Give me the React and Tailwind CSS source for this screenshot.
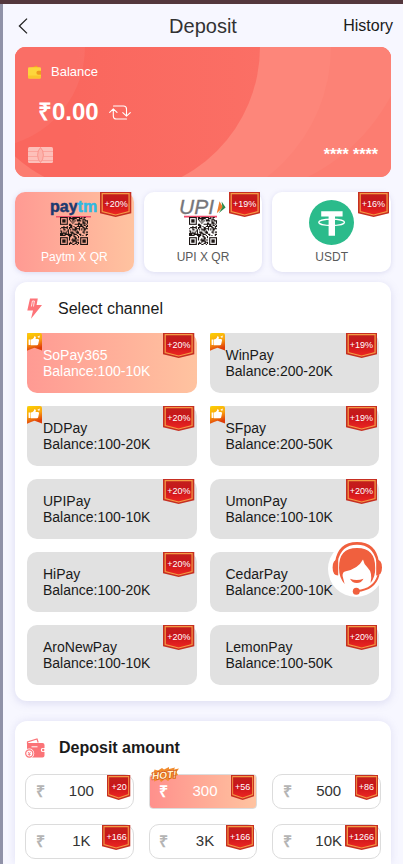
import { useState } from 'react';
import clsx from 'clsx';

const methods = [
  { id: 'paytm', label: 'Paytm X QR', bonus: '+20%' },
  { id: 'upi', label: 'UPI X QR', bonus: '+19%' },
  { id: 'usdt', label: 'USDT', bonus: '+16%' },
];

const channels = [
  { name: 'SoPay365', range: '100-10K', bonus: '+20%', liked: true },
  { name: 'WinPay', range: '200-20K', bonus: '+19%', liked: true },
  { name: 'DDPay', range: '100-20K', bonus: '+20%', liked: true },
  { name: 'SFpay', range: '200-50K', bonus: '+19%', liked: true },
  { name: 'UPIPay', range: '100-10K', bonus: '+20%' },
  { name: 'UmonPay', range: '100-10K', bonus: '+20%' },
  { name: 'HiPay', range: '100-20K', bonus: '+20%' },
  { name: 'CedarPay', range: '200-10K' },
  { name: 'AroNewPay', range: '100-10K', bonus: '+20%' },
  { name: 'LemonPay', range: '100-50K', bonus: '+20%' },
];

const amounts = [
  { value: '100', bonus: '+20' },
  { value: '300', bonus: '+56', hot: true },
  { value: '500', bonus: '+86' },
  { value: '1K', bonus: '+166' },
  { value: '3K', bonus: '+166' },
  { value: '10K', bonus: '+1266' },
];

function BonusBadge({ children }) {
  return (
    <span className="absolute top-0 right-[2px] flex h-[25px] items-center px-1 text-[9px] leading-none text-white">
      <svg className="absolute inset-0 h-full w-full" viewBox="0 0 31 25" preserveAspectRatio="none" aria-hidden="true">
        <defs>
          <linearGradient id="badge" x1="0" y1="0" x2="0" y2="1">
            <stop offset="0" stopColor="#c2201c" />
            <stop offset="0.45" stopColor="#c9141a" />
            <stop offset="1" stopColor="#ee2622" />
          </linearGradient>
        </defs>
        <path d="M0 0H31V21.2L15.5 25 0 21.2Z" fill="#c62f22" />
        <path d="M2.2 1.6H28.8V19.6L15.5 23 2.2 19.6Z" fill="url(#badge)" stroke="#f59a45" strokeWidth="1.2" />
      </svg>
      <span className="relative">{children}</span>
    </span>
  );
}

function LikeRibbon() {
  return (
    <svg className="absolute top-0 left-0 h-[18px] w-[15px]" viewBox="0 0 15 18" aria-hidden="true">
      <defs>
        <linearGradient id="ribbon" x1="0" y1="0" x2="0.3" y2="1">
          <stop offset="0" stopColor="#fcd400" />
          <stop offset="0.55" stopColor="#f9a313" />
          <stop offset="1" stopColor="#e03c08" />
        </linearGradient>
      </defs>
      <path d="M2 0H13Q15 0 15 2V17.6L11 16 7.5 14.8 4 16 0 17.8V2Q0 0 2 0Z" fill="url(#ribbon)" />
      <path d="M1.6 6.6H3.4V12H1.6ZM3.9 6.6 5.6 6.1Q7 5.2 7.3 3.3 9 3 8.9 4.8L8.5 6.1H11Q12.3 6.3 12 7.6L11.2 11.2Q10.9 12.2 10 12.2H3.9Z" fill="#fff" />
      <path d="M10.3 3.8 13 2.4 12.2 5Z" fill="#fff" />
    </svg>
  );
}

const QR_SIZE = 25;
const FINDERS = [[0, 0], [QR_SIZE - 7, QR_SIZE - 7], [0, QR_SIZE - 7]];

function qrPath() {
  let d = '';
  let seed = 91;
  for (let y = 0; y < QR_SIZE; y++) {
    for (let x = 0; x < QR_SIZE; x++) {
      seed = (seed * 48271) % 2147483647;
      const reserved = FINDERS.some(([fx, fy]) => x >= fx - 1 && x <= fx + 7 && y >= fy - 1 && y <= fy + 7);
      if (!reserved && seed / 2147483647 > 0.52) d += `M${x} ${y}h1v1h-1z`;
    }
  }
  return d;
}

const QR_PATH = qrPath();

function QrCode() {
  return (
    <svg className="h-[28px] w-[28px]" viewBox="0 0 25 25" aria-hidden="true">
      <path d={QR_PATH} fill="#1c1513" />
      {FINDERS.map(([x, y]) => (
        <g key={`${x}-${y}`} fill="#1c1513">
          <rect x={x + 0.5} y={y + 0.5} width="6" height="6" fill="none" stroke="#1c1513" />
          <rect x={x + 2} y={y + 2} width="3" height="3" />
        </g>
      ))}
    </svg>
  );
}

function PaytmQr() {
  return (
    <span className="flex h-[45px] flex-col items-center">
      <svg className="h-[17px] w-[48px] overflow-visible" viewBox="0 0 48 17" aria-label="Paytm" role="img">
        <text x="0" y="12" fontFamily="'Liberation Sans', Arial, sans-serif" fontWeight="700" fontSize="16" strokeWidth="0.5">
          <tspan fill="#1d3a70" stroke="#1d3a70">pay</tspan>
          <tspan fill="#2fb9e2" stroke="#2fb9e2">tm</tspan>
        </text>
        <path d="M6 16.8H41" stroke="#f0506a" strokeWidth="1.6" />
      </svg>
      <QrCode />
    </span>
  );
}

function UpiQr() {
  return (
    <span className="flex h-[45px] flex-col items-center">
      <svg className="h-[17px] w-[46px] overflow-visible" viewBox="0 0 46 17" aria-label="UPI" role="img">
        <text x="-1" y="14" fontFamily="'Liberation Sans', Arial, sans-serif" fontStyle="italic" fontSize="21" fill="#77767a" stroke="#77767a" strokeWidth="0.3">
          UPI
        </text>
        <path d="M39.5 1.2 43 7.2 36.8 13.2Z" fill="#ec7c2c" />
        <path d="M41.6 1.5 45.6 7.4 38.6 13.2 42.4 7.2Z" fill="#2c8a4b" />
        <path d="M4 16.6H37" stroke="#ee4a6a" strokeWidth="1.6" />
      </svg>
      <QrCode />
    </span>
  );
}

function UsdtIcon() {
  return (
    <svg className="h-[45px] w-[45px]" viewBox="0 0 45 45" aria-hidden="true">
      <circle cx="22.5" cy="22.5" r="22.5" fill="#2bbb8b" />
      <path d="M12.2 11.2H33.6V16.4H26V35.8H19.6V16.4H12.2Z" fill="#fff" />
      <ellipse cx="22.6" cy="22.3" rx="12.9" ry="3.2" fill="none" stroke="#fff" strokeWidth="1.3" />
    </svg>
  );
}

const methodIcons = { paytm: PaytmQr, upi: UpiQr, usdt: UsdtIcon };

function BalanceCard() {
  return (
    <section className="relative overflow-hidden rounded-[11px] bg-[#fb766b] px-[13px] pt-[15px] pb-[14px] text-white">
      <svg className="absolute inset-0 h-full w-full" viewBox="0 0 376 130" preserveAspectRatio="none" aria-hidden="true">
        <defs>
          <linearGradient id="cardDark" gradientUnits="userSpaceOnUse" x1="60" y1="0" x2="245" y2="0">
            <stop offset="0" stopColor="#fa675e" />
            <stop offset="1" stopColor="#fb6f65" />
          </linearGradient>
        </defs>
        <rect width="376" height="130" fill="#fc7d71" />
        <circle cx="208" cy="-40" r="190" fill="#fc8276" />
        <circle cx="152" cy="0" r="164" fill="#fd867a" />
        <circle cx="98" cy="0" r="147" fill="url(#cardDark)" />
        <circle cx="-31" cy="0" r="101" fill="#fff" fillOpacity="0.05" />
      </svg>
      <div className="relative flex h-5 items-center gap-[10px] text-[13px]">
        <svg className="h-[14px] w-[13px]" viewBox="0 0 13 14" aria-hidden="true">
          <path d="M3 3 8.5 0.5 10.5 3Z" fill="#f3a61d" />
          <rect y="2.2" width="13" height="11.3" rx="1.2" fill="#fdd63c" />
          <path d="M0 10.5H13V12.3Q13 13.5 11.8 13.5H1.2Q0 13.5 0 12.3Z" fill="#fbc52c" />
          <path d="M13 5.8H10.2Q8.4 6 8.4 7.8T10.2 9.8H13Z" fill="#ee9a1f" />
        </svg>
        <span>Balance</span>
      </div>
      <div className="relative mt-[14px] flex h-8 items-center gap-[10px] pl-[10px]">
        <span className="text-2xl font-bold">₹0.00</span>
        <button type="button" aria-label="Refresh balance">
          <svg className="h-[15px] w-[22px]" viewBox="0 0 22 15" fill="none" stroke="#fff" strokeWidth="1.1" strokeLinecap="round" strokeLinejoin="round">
            <path d="M4.5 1H14.5Q17.5 1 17.5 4V11M13.8 7.6 17.5 11.2 21.3 7.6" />
            <path d="M17.5 14H7.5Q4.3 14 4.3 11V3.8M0.7 7.4 4.3 3.8 8 7.4" />
          </svg>
        </button>
      </div>
      <div className="relative mt-[19px] flex h-4 items-center justify-between">
        <svg className="h-4 w-[25px]" viewBox="0 0 25 16" aria-hidden="true">
          <rect width="25" height="16" rx="1.5" fill="#fdc0ba" />
          <path d="M0 4.5H10M15 4.5H25M0 9.5H9.6M15.4 9.5H25M0 13.5H11M14 13.5H25" stroke="#f99a92" strokeWidth="0.7" />
          <path d="M12.5 0.5Q9.6 3.5 9.6 8T12.5 15.5Q15.4 12.5 15.4 8T12.5 0.5Z" fill="#fcb3ac" stroke="#f98c84" strokeWidth="0.8" />
        </svg>
        <span className="text-base font-bold">**** ****</span>
      </div>
    </section>
  );
}

function HotTag() {
  return (
    <svg className="absolute -top-2 left-0 h-4 w-[30px] overflow-visible" viewBox="0 0 30 16" aria-label="HOT!" role="img">
      <path d="M1 6 4 4.5 4.5 2.5 8 3.5 12 1 14 2.5 19 0 19 2 25 0.5 24 2.5 29 1.5 26.5 5 28 8 25.5 9 26 12 21 11.5 18 14 15 12 11 15 9.5 12.5 4 14.5 4.5 11.5 0 11 3 8.5Z" fill="#f08a2c" />
      <text x="2" y="11.4" transform="rotate(-5 15 8)" fontFamily="'Liberation Sans', Arial, sans-serif" fontStyle="italic" fontWeight="700" fontSize="10" fill="#fff3cf" stroke="#d24a14" strokeWidth="1.2" paintOrder="stroke">
        HOT!
      </text>
    </svg>
  );
}

function SupportButton() {
  return (
    <button type="button" aria-label="Customer support" className="fixed top-[541px] right-5 h-14 w-[55px]">
      <svg className="h-14 w-[55px]" viewBox="0 0 55 56" aria-hidden="true">
        <circle cx="28" cy="28" r="28" fill="#fff" />
        <g fill="#f0603e">
          <path d="M7 21Q10 1 29 1T51 21L48.6 21Q45 3.8 29 3.8T9.6 21Z" />
          <path d="M10.2 18.5V34.5Q4.6 34.5 4.6 26.5T10.2 18.5ZM48.2 18.5V34.5Q54 34.5 54 26.5T48.2 18.5Z" />
          <path d="M11 27Q10.5 7 29 7T47.2 27Q47.5 36 42.5 42 45 32 39.5 26.5 35.8 23 35 18.5 30 28 17 30.5 14.4 31.2 14.6 35L16.6 43Q11 36.5 11 27Z" />
          <path d="M22 37.8Q28.5 40.4 35.5 37.8 33.5 42 28.8 42T22 37.8Z" />
          <circle cx="28.3" cy="50.2" r="3.5" />
        </g>
        <path d="M50.5 34Q46.5 48.5 29 50" fill="none" stroke="#f0603e" strokeWidth="2" />
      </svg>
    </button>
  );
}

export default function App() {
  const [method, setMethod] = useState('paytm');
  const [channel, setChannel] = useState('SoPay365');
  const [amount, setAmount] = useState('300');

  return (
    <div className="flex min-h-screen flex-col border-t-4 border-t-[#54373d] bg-[#f7f7ff] font-['Liberation_Sans',Arial,sans-serif] text-[#1a1a1a]">
      <div className="flex grow flex-col border-l-[3px] border-[#9092a8]">
        <header className="grid h-[43px] grid-cols-[1fr_auto_1fr] items-center px-[10px]">
          <button type="button" aria-label="Back" className="justify-self-start pl-[5px]">
            <svg className="h-4 w-[10px]" viewBox="0 0 10 16" fill="none" stroke="#222" strokeWidth="1.3">
              <path d="M9 0.6 1.4 8 9 15.4" />
            </svg>
          </button>
          <h1 className="text-xl text-[#323233]">Deposit</h1>
          <a href="#history" className="justify-self-end text-base">History</a>
        </header>

        <main className="flex grow flex-col px-3">
          <BalanceCard />

          {/* Payment methods */}
          <div className="mt-[15px] grid grid-cols-3 gap-[10px]">
            {methods.map((m) => {
              const Icon = methodIcons[m.id];
              const active = m.id === method;
              return (
                <button
                  key={m.id}
                  type="button"
                  onClick={() => setMethod(m.id)}
                  className={clsx(
                    'relative flex flex-col items-center rounded-[10px] pt-2 pb-[7px] text-xs shadow-[0_1px_5px_rgba(140,140,200,0.25)]',
                    active ? 'bg-linear-to-r from-[#ff9a93] to-[#ffc3a0] text-white' : 'bg-white text-[#5a5a5a]'
                  )}
                >
                  <Icon />
                  <span className="mt-1 leading-4">{m.label}</span>
                  <BonusBadge>{m.bonus}</BonusBadge>
                </button>
              );
            })}
          </div>

          {/* Channels */}
          <section className="mt-[10px] rounded-xl bg-white px-3 pt-4 pb-4 shadow-[0_2px_8px_rgba(140,140,200,0.25)]">
            <div className="flex h-[21px] items-center gap-4">
              <svg className="h-[21px] w-[15px]" viewBox="0 0 15 21" aria-hidden="true">
                <path d="M3 0.5H10.8L9.6 7H15L4 20.8 6 12.5H0.3Z" fill="#fd7479" />
                <path d="M4.4 8.5 5.4 3H7.4L6.5 8.5" fill="none" stroke="#fff" strokeWidth="0.8" />
              </svg>
              <h2 className="text-base">Select channel</h2>
            </div>
            <div className="mt-[14px] grid grid-cols-2 gap-[13px]">
              {channels.map((c) => (
                <button
                  key={c.name}
                  type="button"
                  onClick={() => setChannel(c.name)}
                  className={clsx(
                    'relative rounded-[10px] px-4 py-[14px] text-left text-sm leading-4',
                    c.liked && 'rounded-tl-none',
                    c.name === channel ? 'bg-linear-to-r from-[#ff9a93] to-[#ffc3a0] text-white' : 'bg-[#e1e1e1]'
                  )}
                >
                  {c.liked && <LikeRibbon />}
                  <span className="block">{c.name}</span>
                  <span className="block">Balance:{c.range}</span>
                  {c.bonus && <BonusBadge>{c.bonus}</BonusBadge>}
                </button>
              ))}
            </div>
          </section>

          {/* Amounts */}
          <section className="mt-5 grow rounded-t-xl bg-white px-[10px] pt-[17px] pb-[5px] shadow-[0_0_8px_rgba(140,140,200,0.2)]">
            <div className="flex h-5 items-center gap-[14px]">
              <svg className="h-5 w-5" viewBox="0 0 20 20" aria-hidden="true">
                <path d="M2.5 6V4L12 1 13.2 4.5" fill="none" stroke="#fb7377" strokeWidth="1.2" />
                <path d="M2 5H17.5Q19.5 5 19.5 7V10H17.5Q15.8 10.2 15.8 12T17.5 14H19.5V17.5Q19.5 19.5 17.5 19.5H2Z" fill="#fb7377" />
                <path d="M6.5 8.8H12.5" stroke="#fff" strokeWidth="1" />
                <circle cx="4.3" cy="15.5" r="4.9" fill="#fff" />
                <circle cx="4.3" cy="15.5" r="3.6" fill="none" stroke="#fb7377" strokeWidth="1.2" />
                <path d="M2.8 13.8 4.3 15.5 5.8 13.8M2.8 16.3H5.8M4.3 15.5V17.8" fill="none" stroke="#fb7377" strokeWidth="0.9" />
                <circle cx="18.2" cy="12" r="1.2" fill="#fb7377" />
              </svg>
              <h2 className="text-base font-bold">Deposit amount</h2>
            </div>
            <div className="mt-4 grid grid-cols-3 gap-[15px]">
              {amounts.map((a) => {
                const active = a.value === amount;
                return (
                  <button
                    key={a.value}
                    type="button"
                    onClick={() => setAmount(a.value)}
                    className={clsx(
                      'relative flex h-[35px] items-center border border-[#dcdcdc] pr-[15px] pl-[9px] text-[15px]',
                      active ? 'rounded bg-linear-to-r from-[#ff908c] to-[#ffc3a0] text-white' : 'rounded-[10px] text-[#333]'
                    )}
                  >
                    <span className={clsx('w-[10px] text-base font-bold', active ? 'text-white' : 'text-[#b4b4b4]')}>₹</span>
                    <span className="grow text-center">{a.value}</span>
                    <BonusBadge>{a.bonus}</BonusBadge>
                    {a.hot && <HotTag />}
                  </button>
                );
              })}
            </div>
          </section>
        </main>
      </div>
      <SupportButton />
    </div>
  );
}
